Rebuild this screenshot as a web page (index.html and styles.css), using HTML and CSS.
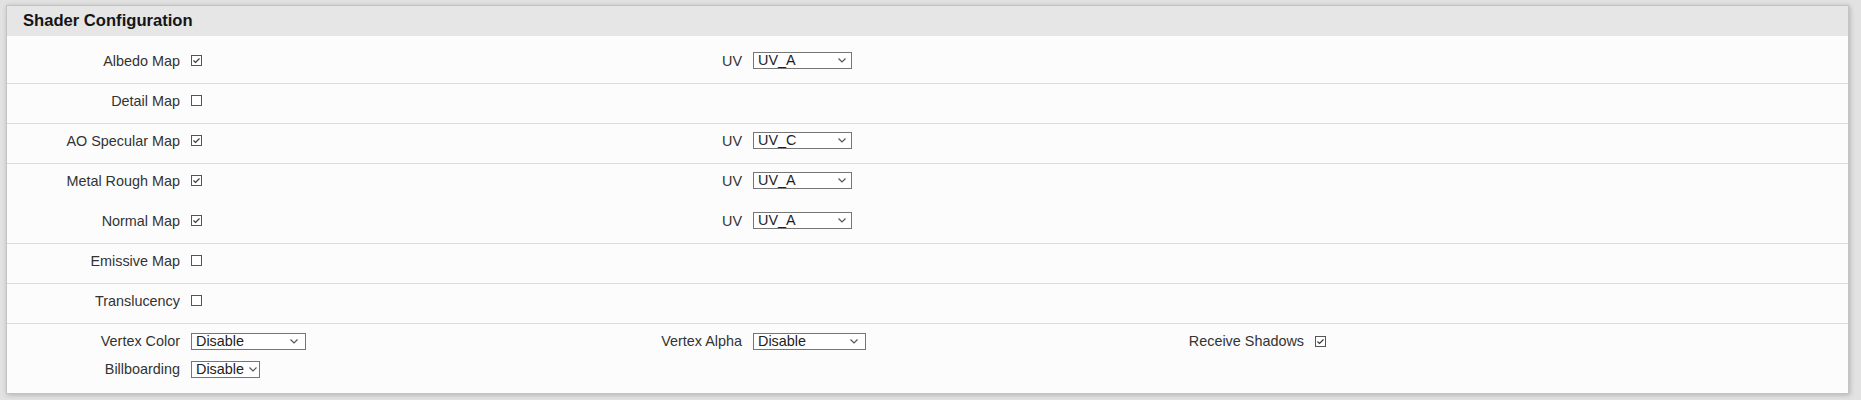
FILE: index.html
```html
<!DOCTYPE html>
<html lang="en">
<head>
<meta charset="utf-8">
<title>Shader Configuration</title>
<link rel="stylesheet" href="styles.css">
</head>
<body>
<div class="panel">
  <div class="panel-header">Shader Configuration</div>
  <div class="panel-body">
    <div class="section">
      <div class="line">
        <span class="field-label">Albedo Map</span>
        <span class="field-control"><svg class="cb" viewBox="0 0 11 11"><rect x="0.5" y="0.5" width="10" height="10"/><path d="M2.5 5.5 L4.5 7.5 L8.5 3.5"/></svg></span>
        <span class="field-label">UV</span>
        <span class="field-control"><span class="select w-uv"><span>UV_A</span><svg class="chev" viewBox="0 0 8 5"><path d="M0.5 0.5 L4 4 L7.5 0.5"/></svg></span></span>
      </div>
    </div>
    <div class="section">
      <div class="line">
        <span class="field-label">Detail Map</span>
        <span class="field-control"><svg class="cb" viewBox="0 0 11 11"><rect x="0.5" y="0.5" width="10" height="10"/></svg></span>
      </div>
    </div>
    <div class="section">
      <div class="line">
        <span class="field-label">AO Specular Map</span>
        <span class="field-control"><svg class="cb" viewBox="0 0 11 11"><rect x="0.5" y="0.5" width="10" height="10"/><path d="M2.5 5.5 L4.5 7.5 L8.5 3.5"/></svg></span>
        <span class="field-label">UV</span>
        <span class="field-control"><span class="select w-uv"><span>UV_C</span><svg class="chev" viewBox="0 0 8 5"><path d="M0.5 0.5 L4 4 L7.5 0.5"/></svg></span></span>
      </div>
    </div>
    <div class="section">
      <div class="line">
        <span class="field-label">Metal Rough Map</span>
        <span class="field-control"><svg class="cb" viewBox="0 0 11 11"><rect x="0.5" y="0.5" width="10" height="10"/><path d="M2.5 5.5 L4.5 7.5 L8.5 3.5"/></svg></span>
        <span class="field-label">UV</span>
        <span class="field-control"><span class="select w-uv"><span>UV_A</span><svg class="chev" viewBox="0 0 8 5"><path d="M0.5 0.5 L4 4 L7.5 0.5"/></svg></span></span>
      </div>
      <div class="line">
        <span class="field-label">Normal Map</span>
        <span class="field-control"><svg class="cb" viewBox="0 0 11 11"><rect x="0.5" y="0.5" width="10" height="10"/><path d="M2.5 5.5 L4.5 7.5 L8.5 3.5"/></svg></span>
        <span class="field-label">UV</span>
        <span class="field-control"><span class="select w-uv"><span>UV_A</span><svg class="chev" viewBox="0 0 8 5"><path d="M0.5 0.5 L4 4 L7.5 0.5"/></svg></span></span>
      </div>
    </div>
    <div class="section">
      <div class="line">
        <span class="field-label">Emissive Map</span>
        <span class="field-control"><svg class="cb" viewBox="0 0 11 11"><rect x="0.5" y="0.5" width="10" height="10"/></svg></span>
      </div>
    </div>
    <div class="section">
      <div class="line">
        <span class="field-label">Translucency</span>
        <span class="field-control"><svg class="cb" viewBox="0 0 11 11"><rect x="0.5" y="0.5" width="10" height="10"/></svg></span>
      </div>
    </div>
    <div class="section compact">
      <div class="line">
        <span class="field-label">Vertex Color</span>
        <span class="field-control"><span class="select w-color"><span>Disable</span><svg class="chev" viewBox="0 0 8 5"><path d="M0.5 0.5 L4 4 L7.5 0.5"/></svg></span></span>
        <span class="field-label">Vertex Alpha</span>
        <span class="field-control"><span class="select w-alpha"><span>Disable</span><svg class="chev" viewBox="0 0 8 5"><path d="M0.5 0.5 L4 4 L7.5 0.5"/></svg></span></span>
        <span class="field-label">Receive Shadows</span>
        <span class="field-control"><svg class="cb" viewBox="0 0 11 11"><rect x="0.5" y="0.5" width="10" height="10"/><path d="M2.5 5.5 L4.5 7.5 L8.5 3.5"/></svg></span>
      </div>
      <div class="line">
        <span class="field-label">Billboarding</span>
        <span class="field-control"><span class="select w-bill"><span>Disable</span><svg class="chev" viewBox="0 0 8 5"><path d="M0.5 0.5 L4 4 L7.5 0.5"/></svg></span></span>
      </div>
    </div>
  </div>
</div>
</body>
</html>
```
FILE: styles.css
```css
html, body {
  margin: 0;
}
body {
  background: #e2e2e2;
  padding: 5px 12px 7px 6px;
  font-family: "Liberation Sans", Arial, sans-serif;
  font-size: 14.4px;
  color: #333;
}
.panel {
  background: #fcfcfc;
  border: 1px solid #c4c4c4;
  box-shadow: 1px 1px 5px rgba(0, 0, 0, 0.22);
}
.panel-header {
  height: 30px;
  line-height: 30px;
  padding-left: 16px;
  background: #e6e6e6;
  font-weight: bold;
  font-size: 16.6px;
  color: #151515;
}
.panel-body {
  padding-top: 8px;
}
.section {
  display: flex;
  flex-direction: column;
  row-gap: 1px;
}
.section + .section {
  border-top: 1px solid #dcdcdc;
}
.line {
  display: grid;
  grid-template-columns: 184px 378px 184px 378px 184px 1fr;
  align-items: center;
  height: 39px;
  padding-bottom: 6px;
  box-sizing: border-box;
}
.section.compact {
  row-gap: 0;
  padding: 3px 0 10px;
}
.compact .line {
  height: 28px;
  padding-bottom: 0;
}
.field-label {
  text-align: right;
  padding-right: 11px;
  white-space: nowrap;
}
.field-control {
  display: flex;
  align-items: center;
}
.cb {
  width: 11px;
  height: 11px;
  display: block;
}
.cb rect {
  fill: #fff;
  stroke: #555;
  stroke-width: 1;
}
.cb path {
  fill: none;
  stroke: #333;
  stroke-width: 1.1;
}
.select {
  display: flex;
  align-items: center;
  justify-content: space-between;
  box-sizing: border-box;
  height: 17px;
  border: 1px solid #767676;
  background: #fff;
  padding: 0 5px 0 4px;
  color: #222;
  line-height: 15px;
}
.chev {
  width: 8px;
  height: 5px;
  display: block;
  flex: none;
}
.chev path {
  fill: none;
  stroke: #555;
  stroke-width: 1.2;
}
.w-uv { width: 99px; }
.w-color { width: 115px; padding-right: 7px; }
.w-alpha { width: 113px; padding-right: 7px; }
.w-bill { width: 69px; padding-right: 2px; }
```
